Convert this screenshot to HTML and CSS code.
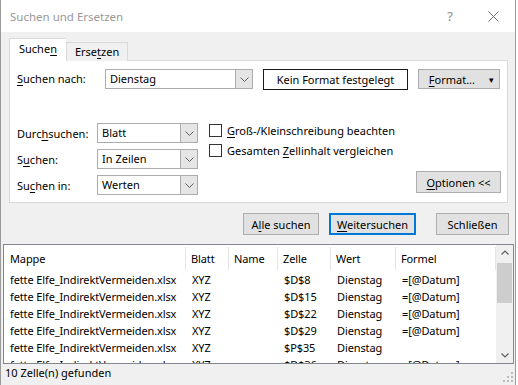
FILE: index.html
```html
<!DOCTYPE html>
<html>
<head>
    <title>Suchen und Ersetzen</title>
    <meta charset="UTF-8">
    <link rel="stylesheet" href="styles.css">
</head>
<body>
    <div class="dialog">
        <div class="titlebar">
            <span class="title">Suchen und Ersetzen</span>
            <span class="help">?</span>
            <svg class="close" width="11" height="11" viewBox="0 0 11 11">
                <path d="M0.5 0.5 L10.5 10.5 M10.5 0.5 L0.5 10.5" stroke="#6f6f6f" stroke-width="1" fill="none"/>
            </svg>
        </div>

        <div class="content">
            <div class="tabs">
                <div class="tab active">Suche<u>n</u></div>
                <div class="tab">Erse<u>t</u>zen</div>
            </div>

            <div class="panel">
                <div class="search-row">
                    <label class="lbl-wide"><u>S</u>uchen nach:</label>
                    <div class="combo combo-search">
                        <span class="combo-text">Dienstag</span>
                        <span class="combo-btn"><svg width="9" height="5" viewBox="0 0 9 5"><path d="M0.5 0.5 L4.5 4.5 L8.5 0.5" stroke="#606060" fill="none"/></svg></span>
                    </div>
                    <div class="format-box">Kein Format festgelegt</div>
                    <button class="btn btn-format"><span><u>F</u>ormat...</span><span class="caret">&#9662;</span></button>
                </div>

                <div class="options">
                    <div class="opt-fields">
                        <label>Durc<u>h</u>suchen:</label>
                        <div class="combo">
                            <span class="combo-text">Blatt</span>
                            <span class="combo-btn"><svg width="9" height="5" viewBox="0 0 9 5"><path d="M0.5 0.5 L4.5 4.5 L8.5 0.5" stroke="#606060" fill="none"/></svg></span>
                        </div>
                        <label>S<u>u</u>chen:</label>
                        <div class="combo">
                            <span class="combo-text">In Zeilen</span>
                            <span class="combo-btn"><svg width="9" height="5" viewBox="0 0 9 5"><path d="M0.5 0.5 L4.5 4.5 L8.5 0.5" stroke="#606060" fill="none"/></svg></span>
                        </div>
                        <label>Su<u>c</u>hen in:</label>
                        <div class="combo">
                            <span class="combo-text">Werten</span>
                            <span class="combo-btn"><svg width="9" height="5" viewBox="0 0 9 5"><path d="M0.5 0.5 L4.5 4.5 L8.5 0.5" stroke="#606060" fill="none"/></svg></span>
                        </div>
                    </div>
                    <div class="opt-checks">
                        <div class="check"><span class="box"></span><span><u>G</u>roß-/Kleinschreibung beachten</span></div>
                        <div class="check"><span class="box"></span><span>Gesamten <u>Z</u>ellinhalt vergleichen</span></div>
                    </div>
                    <button class="btn btn-options"><u>O</u>ptionen &lt;&lt;</button>
                </div>
            </div>

            <div class="actions">
                <button class="btn btn-all">A<u>l</u>le suchen</button>
                <button class="btn btn-next"><u>W</u>eitersuchen</button>
                <button class="btn btn-close">Schließen</button>
            </div>
        </div>

        <div class="results">
            <div class="list">
                <div class="row head">
                    <div>Mappe</div><div>Blatt</div><div>Name</div><div>Zelle</div><div>Wert</div><div>Formel</div>
                </div>
                <div class="row">
                    <div>fette Elfe_IndirektVermeiden.xlsx</div><div>XYZ</div><div></div><div>$D$8</div><div>Dienstag</div><div>=[@Datum]</div>
                </div>
                <div class="row">
                    <div>fette Elfe_IndirektVermeiden.xlsx</div><div>XYZ</div><div></div><div>$D$15</div><div>Dienstag</div><div>=[@Datum]</div>
                </div>
                <div class="row">
                    <div>fette Elfe_IndirektVermeiden.xlsx</div><div>XYZ</div><div></div><div>$D$22</div><div>Dienstag</div><div>=[@Datum]</div>
                </div>
                <div class="row">
                    <div>fette Elfe_IndirektVermeiden.xlsx</div><div>XYZ</div><div></div><div>$D$29</div><div>Dienstag</div><div>=[@Datum]</div>
                </div>
                <div class="row">
                    <div>fette Elfe_IndirektVermeiden.xlsx</div><div>XYZ</div><div></div><div>$P$35</div><div>Dienstag</div><div></div>
                </div>
                <div class="row">
                    <div>fette Elfe_IndirektVermeiden.xlsx</div><div>XYZ</div><div></div><div>$D$36</div><div>Dienstag</div><div>=[@Datum]</div>
                </div>
            </div>
            <div class="scrollbar">
                <svg width="16" height="16" viewBox="0 0 16 16"><path d="M4.5 9.5 L8 6 L11.5 9.5" stroke="#606060" stroke-width="1.2" fill="none"/></svg>
                <div class="track"><div class="thumb"></div></div>
                <svg width="16" height="16" viewBox="0 0 16 16"><path d="M4.5 6.5 L8 10 L11.5 6.5" stroke="#606060" stroke-width="1.2" fill="none"/></svg>
            </div>
        </div>

        <div class="statusbar">
            <span>10 Zelle(n) gefunden</span>
            <svg class="grip" width="10" height="10" viewBox="0 0 10 10">
                <rect x="8" y="0" width="2" height="2" fill="#bbb"/>
                <rect x="4" y="4" width="2" height="2" fill="#bbb"/>
                <rect x="8" y="4" width="2" height="2" fill="#bbb"/>
                <rect x="0" y="8" width="2" height="2" fill="#bbb"/>
                <rect x="4" y="8" width="2" height="2" fill="#bbb"/>
                <rect x="8" y="8" width="2" height="2" fill="#bbb"/>
            </svg>
        </div>
    </div>
</body>
</html>
```

FILE: styles.css
```css
body {
    margin: 0;
    background: #ffffff;
    font-family: "Noto Sans", "Open Sans", sans-serif;
    font-size: 11px;
    color: #000;
}
u {
    text-decoration-thickness: 1px;
    text-underline-offset: 2px;
}
.dialog {
    width: 514px;
    height: 385px;
    border-left: 1px solid #9a9a9a;
    border-right: 1px solid #9a9a9a;
    display: flex;
    flex-direction: column;
    background: #f0f0f0;
    overflow: hidden;
}
.titlebar {
    height: 32px;
    flex: none;
    background: #fff;
    display: flex;
    align-items: center;
    padding-left: 9px;
    padding-right: 16px;
}
.title {
    color: #999;
    flex: 1;
    font-size: 11.5px;
}
.help {
    color: #8a8a8a;
    margin-right: 35px;
    font-size: 13px;
}
.close {
    margin-top: 1px;
}
.content {
    padding: 7px 7px 0 8px;
}
.tabs {
    display: flex;
    align-items: flex-end;
    height: 22px;
    position: relative;
    z-index: 1;
    margin-bottom: -1px;
}
.tab {
    height: 18px;
    line-height: 18px;
    padding: 0 8px;
    border: 1px solid #d9d9d9;
    border-bottom: none;
    background: #f0f0f0;
}
.tab.active {
    height: 22px;
    line-height: 20px;
    background: #fff;
    padding: 0 9px;
    border-right: none;
}
.panel {
    background: #fff;
    border: 1px solid #d9d9d9;
    height: 143px;
    box-sizing: border-box;
    padding: 8px 6px 0 7px;
}
.search-row {
    display: flex;
    align-items: flex-start;
    height: 21px;
}
.lbl-wide {
    width: 88px;
    line-height: 20px;
}
.combo {
    height: 20px;
    box-sizing: border-box;
    border: 1px solid #acacac;
    display: flex;
    background: #fff;
}
.combo-text {
    flex: 1;
    padding-left: 4px;
    line-height: 18px;
}
.combo-btn {
    width: 16px;
    background: #e5e5e5;
    border-left: 1px solid #acacac;
    display: flex;
    align-items: center;
    justify-content: center;
}
.combo-search {
    width: 148px;
}
.format-box {
    width: 145px;
    height: 21px;
    box-sizing: border-box;
    border: 1px solid #1a1a1a;
    margin-left: 10px;
    text-align: center;
    line-height: 19px;
}
.btn {
    font-family: inherit;
    font-size: 11px;
    color: #000;
    background: #e1e1e1;
    border: 1px solid #adadad;
    height: 21px;
    padding: 0;
    box-sizing: border-box;
}
.btn-format {
    width: 82px;
    height: 20px;
    margin-left: 10px;
    display: flex;
    align-items: center;
    justify-content: flex-end;
    padding-right: 5px;
}
.caret {
    font-size: 9px;
    margin-left: 14px;
}
.options {
    display: flex;
    margin-top: 33px;
    height: 72px;
}
.opt-fields {
    display: grid;
    grid-template-columns: 80px 101px;
    grid-auto-rows: 20px;
    row-gap: 6px;
    align-items: center;
}
.opt-checks {
    margin-left: 11px;
    margin-top: -3px;
    flex: 1;
}
.check {
    display: flex;
    align-items: center;
    height: 20px;
}
.box {
    width: 13px;
    height: 13px;
    box-sizing: border-box;
    border: 1px solid #333;
    background: #fff;
    margin-right: 5px;
}
.btn-options {
    width: 85px;
    height: 22px;
    align-self: flex-end;
    margin-bottom: 2px;
}
.actions {
    display: flex;
    justify-content: flex-end;
    padding: 10px 0 0 0;
    height: 22px;
    margin-right: -1px;
}
.btn-all {
    width: 76px;
    height: 22px;
}
.btn-next {
    width: 87px;
    height: 22px;
    margin-left: 10px;
    border: 2px solid #0078d7;
}
.btn-close {
    width: 73px;
    height: 22px;
    margin-left: 20px;
}
.results {
    margin: 9px 1px 0 2px;
    height: 120px;
    flex: none;
    box-sizing: border-box;
    border: 1px solid #828790;
    background: #fff;
    display: flex;
    overflow: hidden;
}
.list {
    flex: 1;
    height: 118px;
    overflow: hidden;
}
.row {
    display: grid;
    grid-template-columns: 182px 43px 49px 53px 65px 100px;
    height: 17px;
    line-height: 17px;
    white-space: nowrap;
    letter-spacing: -0.12px;
}
.row > div {
    padding-left: 6px;
    overflow: hidden;
}
.row.head {
    height: 26px;
    line-height: 26px;
}
.row.head > div {
    border-right: 1px solid #e5e5e5;
    margin: 2px 0 1px 0;
    line-height: 23px;
}
.row.head > div + div {
    margin-left: -1px;
}
.scrollbar {
    width: 17px;
    background: #f0f0f0;
    display: flex;
    flex-direction: column;
    align-items: center;
}
.track {
    flex: 1;
    width: 100%;
    padding-top: 2px;
}
.thumb {
    width: 15px;
    height: 40px;
    margin-left: 1px;
    background: #cdcdcd;
}
.statusbar {
    flex: 1;
    display: flex;
    align-items: center;
    justify-content: space-between;
    padding: 0 2px 4px 4px;
}
.grip {
    align-self: flex-end;
    margin-bottom: -1px;
}
```
